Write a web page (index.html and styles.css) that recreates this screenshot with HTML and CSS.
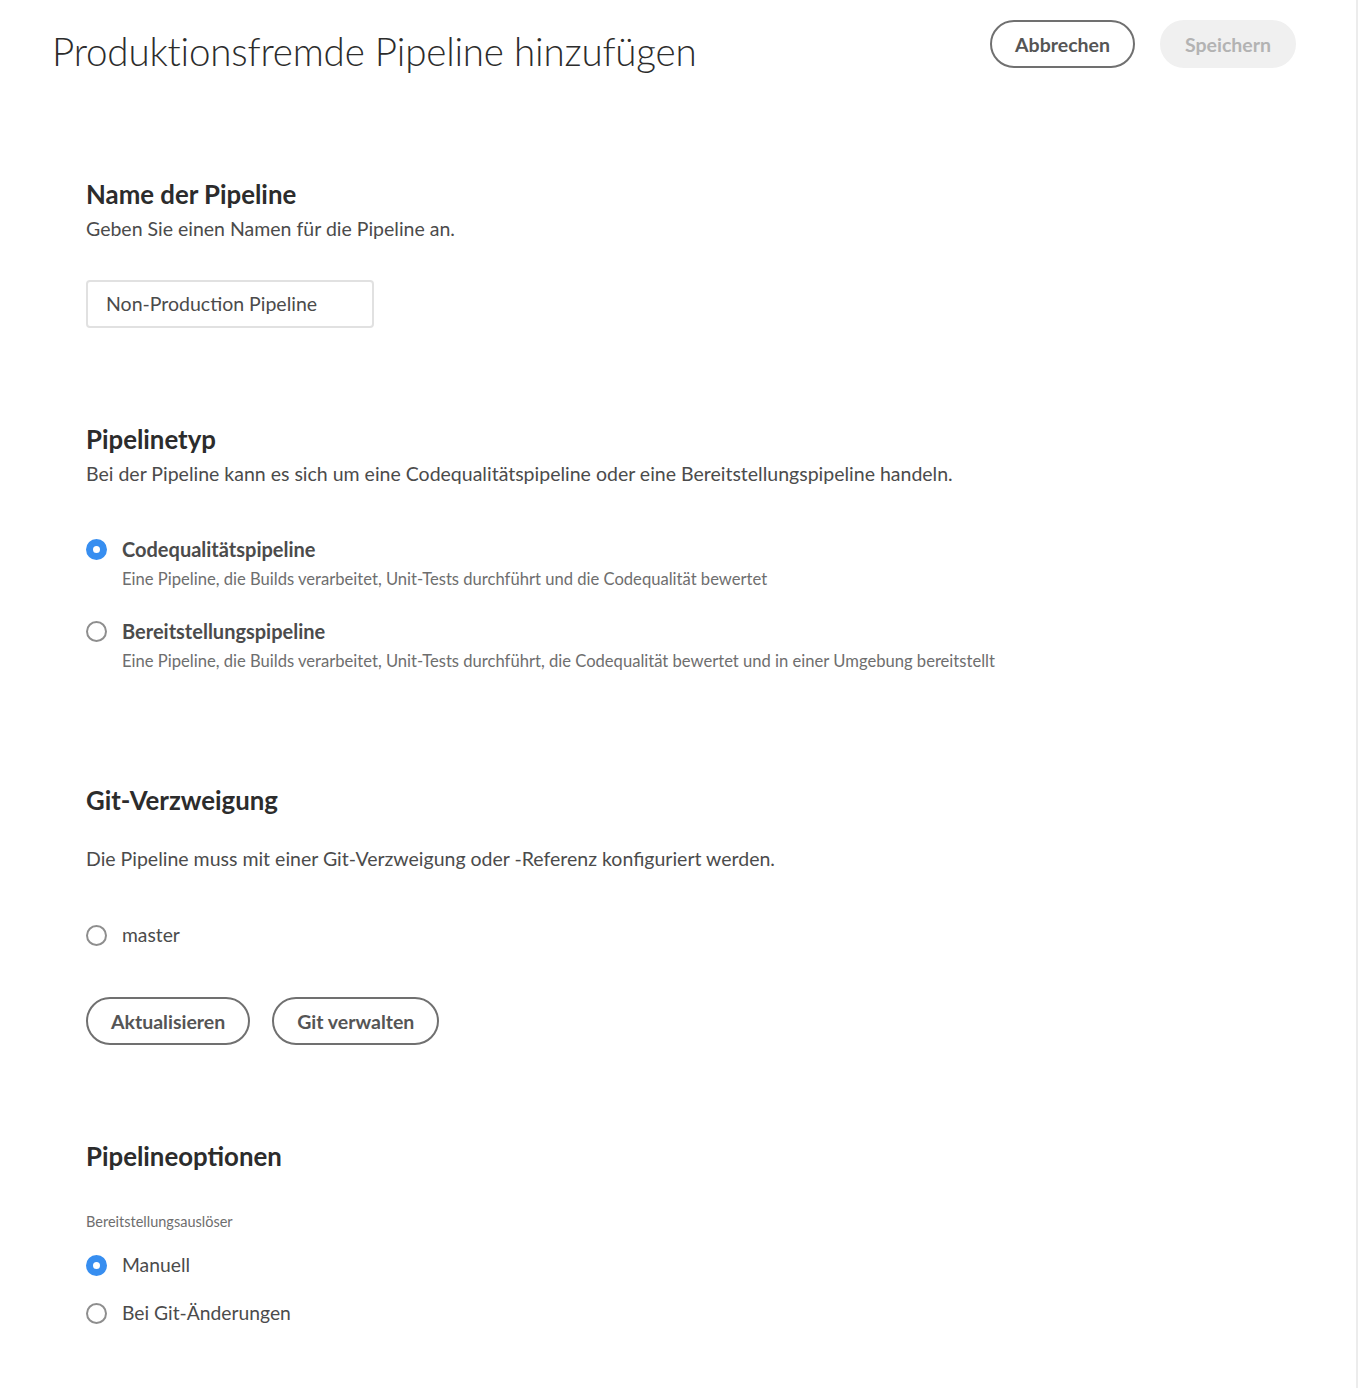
FILE: index.html
```html
<!DOCTYPE html>
<html lang="de">
<head>
<meta charset="utf-8">
<title>Produktionsfremde Pipeline hinzufügen</title>
<link rel="stylesheet" href="styles.css">
</head>
<body>
<div class="page">
  <header class="header">
    <h1 class="title">Produktionsfremde Pipeline hinzufügen</h1>
    <div class="actions">
      <button class="btn btn-outline">Abbrechen</button>
      <button class="btn btn-disabled" disabled>Speichern</button>
    </div>
  </header>

  <main class="content">
    <section class="section s-name">
      <h2 class="heading">Name der Pipeline</h2>
      <p class="desc">Geben Sie einen Namen für die Pipeline an.</p>
      <div class="input">Non-Production Pipeline</div>
    </section>

    <section class="section s-type">
      <h2 class="heading">Pipelinetyp</h2>
      <p class="desc">Bei der Pipeline kann es sich um eine Codequalitätspipeline oder eine Bereitstellungspipeline handeln.</p>
      <div class="radio-group type-group">
        <div class="radio-item">
          <div class="radio-row">
            <span class="radio checked"></span>
            <span class="radio-label strong">Codequalitätspipeline</span>
          </div>
          <p class="radio-help">Eine Pipeline, die Builds verarbeitet, Unit-Tests durchführt und die Codequalität bewertet</p>
        </div>
        <div class="radio-item">
          <div class="radio-row">
            <span class="radio"></span>
            <span class="radio-label strong">Bereitstellungspipeline</span>
          </div>
          <p class="radio-help">Eine Pipeline, die Builds verarbeitet, Unit-Tests durchführt, die Codequalität bewertet und in einer Umgebung bereitstellt</p>
        </div>
      </div>
    </section>

    <section class="section s-git">
      <h2 class="heading">Git-Verzweigung</h2>
      <p class="desc desc-git">Die Pipeline muss mit einer Git-Verzweigung oder -Referenz konfiguriert werden.</p>
      <div class="radio-row master-row">
        <span class="radio"></span>
        <span class="radio-label">master</span>
      </div>
      <div class="git-actions">
        <button class="btn btn-outline">Aktualisieren</button>
        <button class="btn btn-outline">Git verwalten</button>
      </div>
    </section>

    <section class="section s-options">
      <h2 class="heading">Pipelineoptionen</h2>
      <div class="field-label">Bereitstellungsauslöser</div>
      <div class="radio-row trigger-row first">
        <span class="radio checked"></span>
        <span class="radio-label">Manuell</span>
      </div>
      <div class="radio-row trigger-row">
        <span class="radio"></span>
        <span class="radio-label">Bei Git-Änderungen</span>
      </div>
    </section>
  </main>
</div>
</body>
</html>
```

FILE: styles.css
```css
html, body {
  margin: 0;
  padding: 0;
  background: #ffffff;
}

body {
  font-family: "Lato", "Open Sans", "Liberation Sans", sans-serif;
  color: #4b4b4b;
}

.page {
  width: 1356px;
  min-height: 1388px;
  border-right: 2px solid #ececec;
  box-sizing: content-box;
  background: #ffffff;
}

.header {
  display: flex;
  justify-content: space-between;
  align-items: flex-start;
  padding: 20px 60px 0 52px;
}

.title {
  margin: 7px 0 0 0;
  font-size: 38.6px;
  line-height: 48px;
  font-weight: 300;
  color: #2c2c2c;
  letter-spacing: -0.2px;
}

.actions {
  display: flex;
  gap: 25px;
}

.btn {
  font-family: inherit;
  height: 48px;
  box-sizing: border-box;
  border-radius: 24px;
  padding: 0 23px;
  font-size: 19.5px;
  font-weight: 700;
  background: #ffffff;
  border: 2px solid #707070;
  color: #555555;
  cursor: pointer;
}

.btn-disabled {
  background: #f0f0f0;
  border-color: #f0f0f0;
  color: #b3b3b3;
  cursor: default;
}

.content {
  padding-left: 86px;
}

.section {
  display: flex;
  flex-direction: column;
  align-items: flex-start;
}

.heading {
  margin: 0;
  font-size: 25.8px;
  line-height: 30px;
  font-weight: 700;
  color: #2c2c2c;
}

.desc {
  margin: 8px 0 0 0;
  font-size: 19.5px;
  line-height: 24px;
  color: #4b4b4b;
}

.s-name { margin-top: 104px; }

.input {
  margin-top: 39px;
  width: 288px;
  height: 48px;
  box-sizing: border-box;
  border: 2px solid #e1e1e1;
  border-radius: 4px;
  padding: 0 18px;
  font-size: 19.5px;
  line-height: 44px;
  color: #4b4b4b;
}

.s-type { margin-top: 96px; }

.type-group {
  margin-top: 50px;
  display: flex;
  flex-direction: column;
  gap: 28px;
}

.radio-row {
  display: flex;
  align-items: center;
  height: 26px;
}

.radio {
  width: 21px;
  height: 21px;
  box-sizing: border-box;
  border: 2px solid #8e8e8e;
  border-radius: 50%;
  background: #ffffff;
  margin-right: 15px;
  flex: none;
}

.radio.checked {
  border: 7.5px solid #378ef0;
  background: #ffffff;
}

.radio-label {
  font-size: 19.3px;
  line-height: 26px;
  color: #4b4b4b;
}

.radio-label.strong {
  font-weight: 700;
  font-size: 20px;
}

.radio-help {
  margin: 6px 0 0 36px;
  font-size: 16.6px;
  line-height: 22px;
  color: #6e6e6e;
}

.s-git { margin-top: 113px; }

.desc-git { margin-top: 32px; }

.master-row { margin-top: 51px; }

.git-actions {
  margin-top: 49px;
  display: flex;
  gap: 22px;
}

.s-options { margin-top: 96px; padding-bottom: 60px; }

.field-label {
  margin-top: 42px;
  font-size: 14.5px;
  line-height: 18px;
  color: #6e6e6e;
}

.trigger-row.first { margin-top: 21px; }
.trigger-row { margin-top: 22px; }
```
